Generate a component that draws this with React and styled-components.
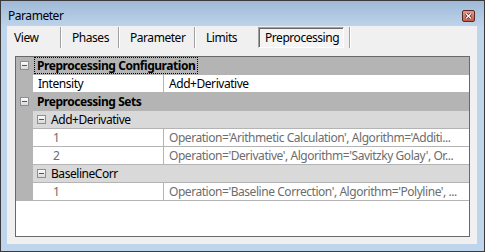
import React from 'react'
import styled, { createGlobalStyle } from 'styled-components'

const GlobalStyle = createGlobalStyle`
  html, body { margin: 0; padding: 0; background: #fff; }
  body {
    font-family: "Noto Sans", "DejaVu Sans", sans-serif;
    font-size: 12px;
    letter-spacing: -0.45px;
    color: #000;
  }
`

const Window = styled.div`
  width: 485px;
  height: 252px;
  box-sizing: border-box;
  border: 1px solid #3a3a3a;
  background: #bfd5eb;
  display: flex;
  flex-direction: column;
`

const TitleBar = styled.div`
  height: 25px;
  flex: none;
  display: flex;
  align-items: center;
  justify-content: space-between;
  padding: 0 9px 0 7px;
  background: linear-gradient(#9fbad7, #bdd3ea);
`

const Title = styled.span`
  font-size: 12px;
  line-height: 14px;
  margin-top: 4px;
`

const CloseButton = styled.div`
  width: 11px;
  height: 10px;
  margin-top: 5px;
  border: 1px solid #5a2a24;
  border-radius: 2px;
  background: linear-gradient(#e09a8c, #c75a47);
  display: flex;
  align-items: center;
  justify-content: center;
`

const Client = styled.div`
  flex: 1;
  margin: 0 7px 7px 6px;
  background: #f0f0f0;
  display: flex;
  flex-direction: column;
  padding: 0 7px 7px 8px;
  min-height: 0;
`

const TabStrip = styled.div`
  height: 22px;
  flex: none;
  display: flex;
  align-items: stretch;
  padding-top: 1px;
  box-sizing: border-box;
  margin-left: -8px;
  margin-bottom: 8px;
`

const Tab = styled.div`
  width: ${p => p.w}px;
  flex: none;
  box-sizing: border-box;
  padding-left: ${p => p.pad}px;
  display: flex;
  align-items: center;
  white-space: nowrap;
`

const ActiveTab = styled.div`
  width: 86px;
  flex: none;
  box-sizing: border-box;
  padding-left: 6px;
  display: flex;
  align-items: center;
  border-top: 1px solid #a0a0a0;
  border-left: 1px solid #a0a0a0;
  border-right: 1px solid #ffffff;
  border-bottom: 1px solid #ffffff;
  box-shadow: inset 1px 1px 0 #696969;
  background: #f4f4f4;
  white-space: nowrap;
`

const Separator = styled.div`
  width: 1px;
  flex: none;
  margin-left: ${p => p.gap || 0}px;
  background: #a0a0a0;
  border-right: 1px solid #ffffff;
`

const Grid = styled.div`
  flex: 1;
  border: 1px solid #696969;
  background: #ffffff;
  display: flex;
  flex-direction: column;
  overflow: hidden;
`

const Row = styled.div`
  height: 18px;
  flex: none;
  box-sizing: border-box;
  display: flex;
  background: #b4b4b4;
  border-bottom: 1px solid #b4b4b4;
`

const Margin = styled.div`
  width: 17px;
  flex: none;
  display: flex;
  align-items: center;
  padding-left: 4px;
  box-sizing: border-box;
`

const CategoryLabel = styled.div`
  margin-left: 2px;
  margin-top: 1px;
  height: 15px;
  padding: 0 2px;
  display: flex;
  align-items: center;
  font-weight: bold;
  white-space: nowrap;
  outline: ${p => (p.focused ? '1px dotted #000' : 'none')};
`

const SubCategory = styled.div`
  flex: 1;
  display: flex;
  align-items: center;
  gap: 5px;
  padding-left: 4px;
  background: #d9d9d9;
  white-space: nowrap;
`

const NameCell = styled.div`
  width: 131px;
  flex: none;
  box-sizing: border-box;
  padding-left: ${p => p.indent}px;
  border-right: 1px solid #b4b4b4;
  background: #ffffff;
  color: ${p => p.tone};
  display: flex;
  align-items: center;
  white-space: nowrap;
`

const ValueCell = styled.div`
  flex: 1;
  min-width: 0;
  padding: 0 2px 0 5px;
  background: #ffffff;
  color: ${p => p.tone};
  line-height: 17px;
  white-space: nowrap;
  overflow: hidden;
  text-overflow: ellipsis;
`

function Toggle() {
  return (
    <svg width="9" height="9" viewBox="0 0 9 9">
      <defs>
        <linearGradient id="tg" x1="0" y1="0" x2="0" y2="1">
          <stop offset="0" stopColor="#ffffff" />
          <stop offset="1" stopColor="#d6d6d6" />
        </linearGradient>
      </defs>
      <rect x="0.5" y="0.5" width="8" height="8" fill="url(#tg)" stroke="#8c8e94" />
      <line x1="2" y1="4.5" x2="7" y2="4.5" stroke="#3a5a8c" />
    </svg>
  )
}

function Category({ label, focused }) {
  return (
    <Row>
      <Margin><Toggle /></Margin>
      <CategoryLabel focused={focused}>{label}</CategoryLabel>
    </Row>
  )
}

function Group({ label }) {
  return (
    <Row>
      <Margin />
      <SubCategory><Toggle />{label}</SubCategory>
    </Row>
  )
}

function Item({ name, value, indent = 5, tone = '#000' }) {
  return (
    <Row>
      <Margin />
      <NameCell indent={indent} tone={tone}>{name}</NameCell>
      <ValueCell tone={tone}>{value}</ValueCell>
    </Row>
  )
}

const tabs = [
  { label: 'View', w: 53, pad: 7 },
  { label: 'Phases', w: 56, pad: 10 },
  { label: 'Parameter', w: 74, pad: 10 },
]

export default function App() {
  const grey = '#6d6d6d'
  return (
    <>
      <GlobalStyle />
      <Window>
        <TitleBar>
          <Title>Parameter</Title>
          <CloseButton>
            <svg width="7" height="6" viewBox="0 0 7 6">
              <path d="M1 0.5 L6 5.5 M6 0.5 L1 5.5" stroke="#4a1f1a" strokeWidth="2.6" />
              <path d="M1 0.5 L6 5.5 M6 0.5 L1 5.5" stroke="#ffffff" strokeWidth="1.4" />
            </svg>
          </CloseButton>
        </TitleBar>
        <Client>
          <TabStrip>
            {tabs.map(t => (
              <React.Fragment key={t.label}>
                <Tab w={t.w} pad={t.pad}>{t.label}</Tab>
                <Separator />
              </React.Fragment>
            ))}
            <Tab w={62} pad={10}>Limits</Tab>
            <ActiveTab>Preprocessing</ActiveTab>
            <Separator gap={5} />
          </TabStrip>
          <Grid>
            <Category label="Preprocessing Configuration" focused />
            <Item name="Intensity" value="Add+Derivative" />
            <Category label="Preprocessing Sets" />
            <Group label="Add+Derivative" />
            <Item indent={20} tone={grey} name="1"
              value="Operation='Arithmetic Calculation', Algorithm='Additi..." />
            <Item indent={20} tone={grey} name="2"
              value="Operation='Derivative', Algorithm='Savitzky Golay', Or..." />
            <Group label="BaselineCorr" />
            <Item indent={20} tone={grey} name="1"
              value="Operation='Baseline Correction', Algorithm='Polyline', ..." />
          </Grid>
        </Client>
      </Window>
    </>
  )
}
